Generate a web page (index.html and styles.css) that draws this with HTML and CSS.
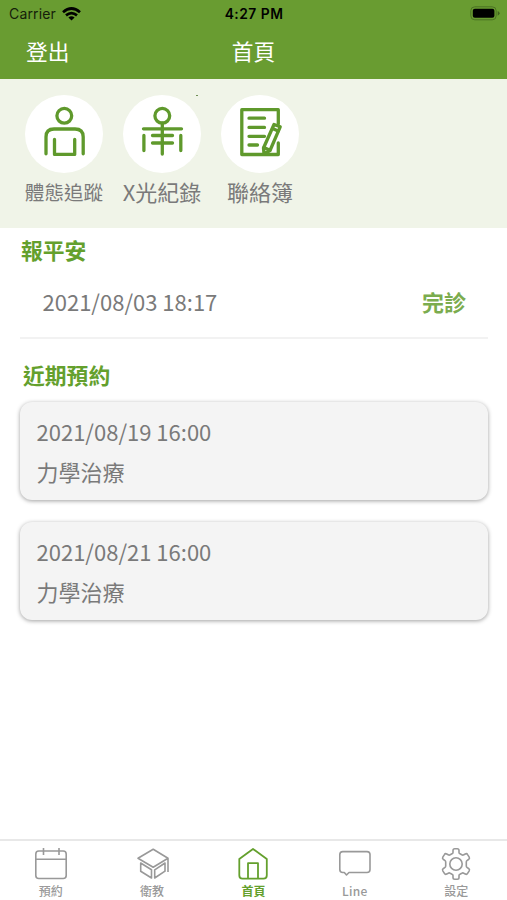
FILE: index.html
```html
<!DOCTYPE html>
<html lang="zh-Hant">
<head>
<meta charset="utf-8">
<meta name="viewport" content="width=device-width">
<title>首頁</title>
<link rel="stylesheet" href="styles.css">
</head>
<body>
<div class="app">
  <header class="header">
    <div class="status">
      <div class="carrier"><span>Carrier</span>
        <svg class="wifi" width="19" height="14" viewBox="0 0 19 14" fill="none" stroke="#000" stroke-width="2.7"><path d="M1 5.2Q9.5-2.2 18 5.2M4 8.4Q9.5 3.8 15 8.4"/><path d="M6.4 10.4Q9.5 8 12.6 10.4L9.5 13.6Z" fill="#000" stroke="none"/></svg>
      </div>
      <span class="time">4:27 PM</span>
      <svg class="battery" width="31" height="15" viewBox="0 0 31 15"><rect x=".8" y=".8" width="25.4" height="13" rx="4" fill="none" stroke="#4b7323"/><rect x="2.8" y="2.8" width="21.6" height="9" rx="2" fill="#000"/><path d="M27.7 5v4.7Q29.6 8.8 29.6 7.3T27.7 5Z" fill="#41631f"/></svg>
    </div>
    <div class="nav"><span class="logout">登出</span><h1>首頁</h1></div>
  </header>

  <section class="shortcuts">
    <a class="shortcut">
      <span class="disc"><svg width="78" height="78" viewBox="0 0 78 78" class="art"><circle cx="39.3" cy="20.8" r="7.4"/><path d="M21 58.8V42Q21 34 29 34H50Q58.2 34 58.2 42V58.8M29.5 44.4V59.4H49.7V44.4"/></svg></span>
      <span class="label small">體態追蹤</span>
    </a>
    <a class="shortcut">
      <span class="disc"><svg width="78" height="78" viewBox="0 0 78 78" class="art"><circle cx="39.3" cy="20.8" r="7.4"/><path d="M39.3 28V59M20.5 33.8H58.5M29.5 40.5H49.5M29.5 48H49.5M20.9 40.5V55.5M57.8 40.5V55.5"/></svg></span>
      <span class="label">X光紀錄</span>
    </a>
    <a class="shortcut">
      <span class="disc"><svg width="78" height="78" viewBox="0 0 78 78" class="art"><path d="M57.3 29V14.7H20.8V59.5H57.3V48M28 23.2H43.5M28 32.4H43.5M28 41.3H43.5M28 50H36.5"/><path d="M53 29.5L59.2 31.8L49 55.5L43 59L42.5 53Z" fill="#fff"/><path d="M51.5 33.5L57.2 36M43 52.5L48.8 55.2"/></svg></span>
      <span class="label">聯絡簿</span>
    </a>
    <i class="speck"></i>
  </section>

  <main class="content">
    <h2>報平安</h2>
    <div class="report"><span>2021/08/03 18:17</span><b>完診</b></div>
    <h2 class="upcoming">近期預約</h2>
    <article class="card"><p>2021/08/19 16:00</p><p>力學治療</p></article>
    <article class="card"><p>2021/08/21 16:00</p><p>力學治療</p></article>
  </main>

  <nav class="tabs">
    <a class="tab"><svg width="36" height="34" viewBox="0 0 36 34"><rect x="2.8" y="4" width="30.4" height="27.5" rx="3"/><path d="M2.8 12.3H33.2M10.5 1V8M26 1V8"/></svg><span>預約</span></a>
    <a class="tab"><svg width="36" height="34" viewBox="0 0 36 34"><path d="M4 11.3L19.2 2.2L34 11.3L19.2 20.3ZM34 11.3V25M6.7 16V24.2L17.5 31V22.8ZM31 16V24.2L20.7 31V22.8Z"/></svg><span>衛教</span></a>
    <a class="tab active"><svg width="36" height="34" viewBox="0 0 36 34"><path d="M4.3 12L18 2L31.8 12V28.3Q31.8 31.7 28.5 31.7H7.5Q4.3 31.7 4.3 28.3ZM13 31.7V16.2H23V31.7"/></svg><span>首頁</span></a>
    <a class="tab"><svg width="36" height="34" viewBox="0 0 36 34"><path d="M5.8 4.6H30Q33 4.6 33 7.6V22.5Q33 25.5 30 25.5H12L9.5 28L7.3 25.5H5.8Q2.8 25.5 2.8 22.5V7.6Q2.8 4.6 5.8 4.6Z"/></svg><span class="latin">Line</span></a>
    <a class="tab"><svg width="36" height="34" viewBox="0 0 36 34"><circle cx="18" cy="17" r="6.2"/><path d="M15 3.5Q15 1.8 16.7 1.8H19.3Q21 1.8 21 3.5V5.4Q21 6.4 22 6.8L23.8 7.8Q24.8 8.4 25.8 7.8L27.3 7Q28.8 6.2 29.6 7.6L31.2 10.2Q32 11.6 30.6 12.5L29.2 13.4Q28.3 14 28.3 15V19Q28.3 20 29.2 20.6L30.6 21.5Q32 22.4 31.2 23.8L29.6 26.4Q28.8 27.8 27.3 27L25.8 26.2Q24.8 25.6 23.8 26.2L22 27.2Q21 27.6 21 28.6V30.5Q21 32.2 19.3 32.2H16.7Q15 32.2 15 30.5V28.6Q15 27.6 14 27.2L12.2 26.2Q11.2 25.6 10.2 26.2L8.7 27Q7.2 27.8 6.4 26.4L4.8 23.8Q4 22.4 5.4 21.5L6.8 20.6Q7.7 20 7.7 19V15Q7.7 14 6.8 13.4L5.4 12.5Q4 11.6 4.8 10.2L6.4 7.6Q7.2 6.2 8.7 7L10.2 7.8Q11.2 8.4 12.2 7.8L14 6.8Q15 6.4 15 5.4Z"/></svg><span>設定</span></a>
  </nav>
</div>
</body>
</html>
```
FILE: styles.css
```css
* { box-sizing: border-box; }
body { margin: 0; background: #fff; color: #7a7a7a; font-family: "Noto Sans CJK TC", sans-serif; }
h1, h2, p { margin: 0; }
svg { display: block; flex: none; }
.app { height: 900px; display: flex; flex-direction: column; }
.header { height: 79px; background: #699c31; flex: none; }
.status { height: 28px; display: grid; grid-template-columns: 1fr auto 1fr; align-items: center; padding: 0 6px 0 9px; color: #000; font: 14px/28px Inter, sans-serif; }
.carrier { display: flex; align-items: center; gap: 6px; color: #15200a; letter-spacing: .15px; }
.wifi { margin-top: -1px; }
.time { font-weight: 600; font-size: 13.8px; letter-spacing: .5px; margin-left: -2px; }
.battery { justify-self: end; margin-top: -1px; }
.nav { display: grid; grid-template-columns: 1fr auto 1fr; height: 46px; align-items: center; padding-left: 26px; padding-right: 26px; color: #fff; font-size: 21.7px; line-height: 46px; }
.nav h1 { font-size: inherit; font-weight: 400; }

.shortcuts { position: relative; height: 149px; flex: none; display: flex; gap: 20px; padding: 16px 25px 0; background: #f0f4e8; }
.shortcut { width: 78px; display: flex; flex-direction: column; align-items: center; }
.disc { width: 78px; height: 78px; border-radius: 50%; background: #fff; }
.art { fill: none; stroke: #5f992c; stroke-width: 3.3; stroke-linecap: round; stroke-linejoin: round; }
.label { font-size: 22px; line-height: 36px; white-space: nowrap; }
.small { font-size: 19.6px; line-height: 38px; }
.speck { position: absolute; left: 196px; top: 16px; width: 2px; height: 1px; background: #6f8e55; }

.content { flex: 1; padding: 5px 19px 0 20px; font-size: 22px; }
h2 { font-size: 21.8px; line-height: 34px; font-weight: 700; color: #64a02d; padding-left: 1px; }
.report { height: 72px; border-bottom: 2px solid #f2f2f2; display: flex; justify-content: space-between; align-items: center; padding: 0 22px 2px 22.5px; }
.report b { color: #7bac4e; }
.upcoming { margin: 19px 0 10px; padding-left: 3px; }
.card { height: 98px; margin-bottom: 22px; padding: 9px 16.5px; border-radius: 12px; background: #f4f4f4; box-shadow: 0 1px 4px rgba(0,0,0,.38); line-height: 40px; }

.tabs { height: 61px; flex: none; border-top: 2px solid #e8e8e8; display: grid; grid-template-columns: repeat(5, 1fr); }
.tab { display: flex; flex-direction: column; align-items: center; gap: 1px; padding-top: 6px; color: #999; font-size: 12px; line-height: 18px; font-weight: 500; }
.tab svg { fill: none; stroke: #999; stroke-width: 1.6; stroke-linejoin: round; }
.tab.active { color: #64a02d; font-weight: 700; }
.tab.active svg { stroke: #64a02d; stroke-width: 1.8; }
.latin { letter-spacing: .3px; }
```
